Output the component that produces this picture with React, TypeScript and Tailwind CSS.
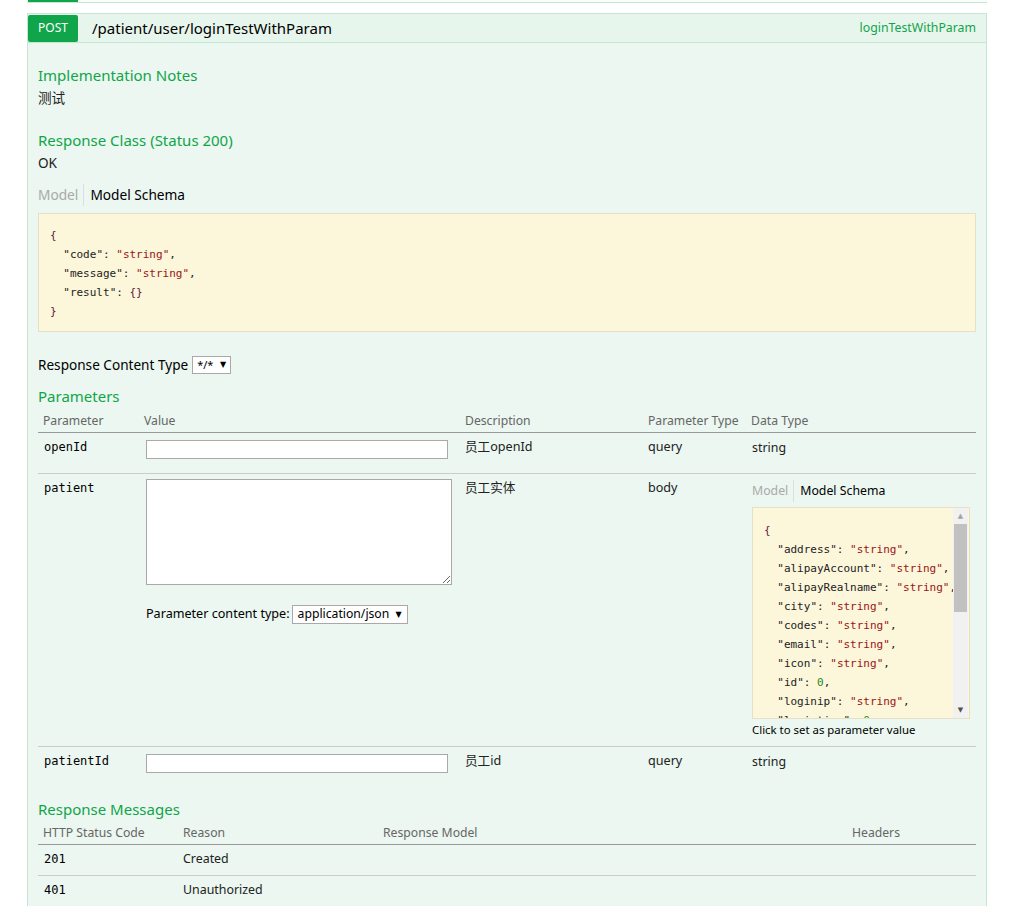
import React from 'react';

const SANS = "font-['Noto_Sans','Noto_Sans_CJK_SC',sans-serif]";
const MONO = "font-['DejaVu_Sans_Mono',monospace]";

type Line = { indent?: boolean; k?: string; v?: string; num?: boolean; brace?: string; last?: boolean };

const responseLines: Line[] = [
    { brace: '{' },
    { indent: true, k: 'code', v: 'string' },
    { indent: true, k: 'message', v: 'string' },
    { indent: true, k: 'result', brace: '{}', last: true },
    { brace: '}' },
];

const patientLines: Line[] = [
    { brace: '{' },
    { indent: true, k: 'address', v: 'string' },
    { indent: true, k: 'alipayAccount', v: 'string' },
    { indent: true, k: 'alipayRealname', v: 'string' },
    { indent: true, k: 'city', v: 'string' },
    { indent: true, k: 'codes', v: 'string' },
    { indent: true, k: 'email', v: 'string' },
    { indent: true, k: 'icon', v: 'string' },
    { indent: true, k: 'id', v: '0', num: true },
    { indent: true, k: 'loginip', v: 'string' },
    { indent: true, k: 'logintime', v: '0', num: true },
];

function CodeLine({ line }: { line: Line }) {
    if (!line.k) {
        return <div className="text-[#5c1a3c]">{line.brace}</div>;
    }
    return (
        <div className="whitespace-pre">
            {line.indent ? '  ' : ''}
            <span className="text-[#222]">"{line.k}"</span>
            <span className="text-[#222]">: </span>
            {line.brace ? (
                <span className="text-[#5c1a3c]">{line.brace}</span>
            ) : line.num ? (
                <span className="text-[#1c8a1c]">{line.v}</span>
            ) : (
                <span className="text-[#9a1414]">"{line.v}"</span>
            )}
            {!line.last && <span className="text-[#222]">,</span>}
        </div>
    );
}

function SignatureTabs({ small }: { small?: boolean }) {
    return (
        <div className={`flex h-[22px] items-center ${small ? 'text-[12.3px]' : 'text-[13.7px]'}`}>
            <span className="pr-[5px] text-[#aaa] border-r border-[#ddd] h-full flex items-center">Model</span>
            <span className="pl-[6px] text-black">Model Schema</span>
        </div>
    );
}

function FakeSelect({ label, className }: { label: string; className: string }) {
    return (
        <div className={`inline-flex items-center justify-between bg-white border border-[#a9a9a9] ${className}`}>
            <span>{label}</span>
            <span className="text-[8px] font-['DejaVu_Sans',sans-serif] text-black">▼</span>
        </div>
    );
}

const paramCols = ['w-[101px]', 'w-[321px]', 'w-[183px]', 'w-[103px]', 'w-[230px]'];

function ParamRow({ name, desc, type, tall }: { name: string; desc: string; type: string; tall?: boolean }) {
    return (
        <div className={`flex ${tall ? 'h-[41px] border-b border-[#ccc]' : 'h-[41px]'}`}>
            <div className={`${paramCols[0]} pl-[6px] pt-[5px] leading-[18px] text-[12px] ${MONO} text-black`}>{name}</div>
            <div className={`${paramCols[1]} pl-[7px] pt-[6px]`}>
                <input className="w-[302px] h-[19px] bg-white border border-[#a9a9a9] outline-none" />
            </div>
            <div className={`${paramCols[2]} pl-[5px] pt-[5px] leading-[18px] text-[12.6px]`}>{desc}</div>
            <div className={`${paramCols[3]} pl-[5px] pt-[5px] leading-[18px] text-[12.6px]`}>{type}</div>
            <div className={`${paramCols[4]} pl-[6px] pt-[6px] leading-[18px] text-[12.4px]`}>string</div>
        </div>
    );
}

export default function App() {
    return (
        <div className={`min-h-[906px] bg-white ${SANS} text-[13.6px] text-[#222] overflow-hidden`}>
            {/* tail of previous operation */}
            <div className="ml-[27px] w-[960px] h-[3px] border-b border-[#c3e8d1] bg-[#fafdfb]">
                <div className="ml-px w-[50px] h-[2px] bg-[#10a54a]" />
            </div>

            <div className="ml-[27px] mt-[10px] w-[960px]">
                {/* heading */}
                <div className="flex items-center h-[30px] border border-[#c3e8d1] bg-[#e7f6ec]">
                    <div className="w-[50px] h-[27px] flex items-center justify-center bg-[#10a54a] rounded-[2px] text-white text-[12px]">
                        POST
                    </div>
                    <div className="ml-[14px] text-[15px] text-black">/patient/user/loginTestWithParam</div>
                    <div className="ml-auto pr-[10px] text-[12.3px] text-[#10a54a]">loginTestWithParam</div>
                </div>

                {/* content */}
                <div className="bg-[#ebf7f0] border border-t-0 border-[#c3e8d1] pl-[10px] pr-[10px] pt-[22px] pb-[30px]">
                    <h4 className="text-[15px] leading-[20px] text-[#10a54a]">Implementation Notes</h4>
                    <p className="mt-[4px] leading-[18px]">测试</p>

                    <h4 className="mt-[23px] text-[15px] leading-[20px] text-[#10a54a]">Response Class (Status 200)</h4>
                    <p className="mt-[4px] leading-[18px]">OK</p>

                    <div className="mt-[12px]">
                        <SignatureTabs />
                    </div>
                    <div className={`mt-[7px] bg-[#fcf6db] border border-[#e5e0c6] px-[11px] pt-[12px] pb-[10px] ${MONO} text-[11px] leading-[19px]`}>
                        {responseLines.map((l, i) => (
                            <CodeLine key={i} line={l} />
                        ))}
                    </div>

                    <div className="mt-[23px] h-[20px] flex items-center text-black">
                        <span>Response Content Type</span>
                        <FakeSelect label="*/*" className="ml-[4px] w-[39px] h-[18px] px-[4px] text-[11px]" />
                    </div>

                    <h4 className="mt-[11px] text-[15px] leading-[20px] text-[#10a54a]">Parameters</h4>
                    <div className="mt-[3px]">
                        <div className="flex h-[24px] items-center pt-[1px] border-b border-[#999] text-[#666] text-[12.2px]">
                            <div className={`${paramCols[0]} pl-[5px]`}>Parameter</div>
                            <div className={`${paramCols[1]} pl-[5px]`}>Value</div>
                            <div className={`${paramCols[2]} pl-[5px]`}>Description</div>
                            <div className={`${paramCols[3]} pl-[5px]`}>Parameter Type</div>
                            <div className={`${paramCols[4]} pl-[5px]`}>Data Type</div>
                        </div>

                        <ParamRow name="openId" desc="员工openId" type="query" tall />

                        <div className="flex h-[273px] border-b border-[#ccc]">
                            <div className={`${paramCols[0]} pl-[6px] pt-[5px] leading-[18px] text-[12px] ${MONO} text-black`}>patient</div>
                            <div className={`${paramCols[1]} pl-[7px] pt-[5px]`}>
                                <textarea className="block w-[306px] h-[106px] bg-white border border-[#a9a9a9] outline-none" />
                                <div className="mt-[20px] h-[19px] flex items-center text-black text-[12.6px]">
                                    <span>Parameter content type:</span>
                                    <FakeSelect label="application/json" className="ml-[2px] w-[116px] h-[19px] pl-[5px] pr-[5px] text-[12.2px]" />
                                </div>
                            </div>
                            <div className={`${paramCols[2]} pl-[5px] pt-[5px] leading-[18px] text-[12.6px]`}>员工实体</div>
                            <div className={`${paramCols[3]} pl-[5px] pt-[5px] leading-[18px] text-[12.6px]`}>body</div>
                            <div className={`${paramCols[4]} pl-[6px] pt-[6px]`}>
                                <SignatureTabs small />
                                <div className="mt-[5px] w-[218px] h-[212px] flex bg-[#fcf6db] border border-[#e5e0c6] overflow-hidden">
                                    <div className={`flex-1 overflow-hidden pl-[11px] pt-[13px] ${MONO} text-[11px] leading-[19px]`}>
                                        {patientLines.map((l, i) => (
                                            <CodeLine key={i} line={l} />
                                        ))}
                                    </div>
                                    <div className="w-[15px] mr-px bg-[#f1f1f1] flex flex-col items-center">
                                        <div className="h-[16px] flex items-center justify-center text-[#a3a3a3] text-[7px] font-['DejaVu_Sans',sans-serif]">▲</div>
                                        <div className="w-[13px] h-[88px] bg-[#c1c1c1]" />
                                        <div className="flex-1" />
                                        <div className="h-[16px] flex items-center justify-center text-[#505050] text-[7px] font-['DejaVu_Sans',sans-serif]">▼</div>
                                    </div>
                                </div>
                                <div className="mt-[2px] leading-[18px] text-[11.4px] text-black">Click to set as parameter value</div>
                            </div>
                        </div>

                        <ParamRow name="patientId" desc="员工id" type="query" />
                    </div>

                    <h4 className="mt-[11px] text-[15px] leading-[20px] text-[#10a54a]">Response Messages</h4>
                    <div className="mt-[2px]">
                        <div className="flex h-[24px] items-center pt-[1px] border-b border-[#999] text-[#666] text-[12.2px]">
                            <div className="w-[140px] pl-[5px]">HTTP Status Code</div>
                            <div className="w-[200px] pl-[5px]">Reason</div>
                            <div className="w-[469px] pl-[5px]">Response Model</div>
                            <div className="w-[129px] pl-[5px]">Headers</div>
                        </div>
                        {[
                            ['201', 'Created'],
                            ['401', 'Unauthorized'],
                            ['403', 'Forbidden'],
                            ['404', 'Not Found'],
                        ].map(([code, reason]) => (
                            <div key={code} className="flex h-[31px] border-b border-[#ccc]">
                                <div className={`w-[140px] pl-[6px] pt-[5px] leading-[18px] text-[12px] ${MONO} text-black`}>{code}</div>
                                <div className="w-[200px] pl-[5px] pt-[5px] leading-[18px] text-[12.4px]">{reason}</div>
                                <div className="w-[469px]" />
                                <div className="w-[129px]" />
                            </div>
                        ))}
                    </div>
                </div>
            </div>
        </div>
    );
}
